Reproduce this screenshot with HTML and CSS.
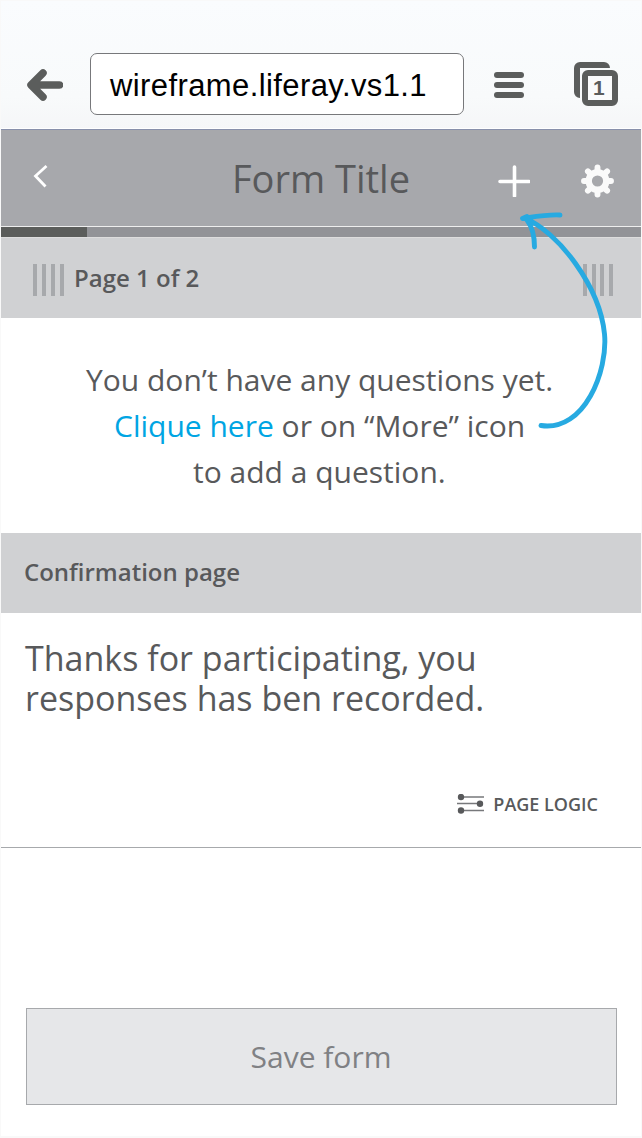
FILE: index.html
```html
<!DOCTYPE html>
<html lang="en">
<head>
<meta charset="utf-8">
<title>Form Title</title>
<link rel="stylesheet" href="styles.css">
</head>
<body>
<div class="screen">
  <header class="browser">
    <svg class="back-arrow" width="38" height="34" viewBox="0 0 38 34"><path d="M18 5 6 17 18 29M7 17h27.500" fill="none" stroke="#5b5d5c" stroke-width="7.500" stroke-linecap="round" stroke-linejoin="round"/></svg>
    <div class="address"><span>wireframe.liferay.vs1.1</span></div>
    <svg class="menu" width="30" height="26" viewBox="0 0 30 26" fill="#5b5d5c"><rect width="30" height="6" rx="3"/><rect y="10" width="30" height="6" rx="3"/><rect y="20" width="30" height="6" rx="3"/></svg>
    <div class="tabs">
      <svg width="44" height="44" viewBox="0 0 44 44"><path d="M36 6A6 6 0 0 0 30 0H6A6 6 0 0 0 0 6V30A6 6 0 0 0 6 36V6Z" fill="#5b5d5c"/><rect x="11" y="11" width="30" height="30" rx="3" fill="#fafbfc" stroke="#5b5d5c" stroke-width="6"/></svg>
      <span class="tab-count">1</span>
    </div>
  </header>
  <nav class="titlebar">
    <svg class="chevron" width="15" height="24" viewBox="0 0 15 24"><path d="M13.500 2 2.500 12 12.500 22.500" fill="none" stroke="#fff" stroke-width="2.800"/></svg>
    <h1>Form Title</h1>
    <svg class="plus" width="32" height="32" viewBox="0 0 32 32"><path d="M16.500 2v29M2 16.500h29" stroke="#fff" stroke-width="3.600" stroke-linecap="round"/></svg>
    <svg class="gear" width="34" height="34" viewBox="-17.500 -17 34 34">
      <g fill="none" stroke="#fafafa"><circle r="8.800" stroke-width="6.400"/><path d="M0-11V-13.500M0 11V13.500M-11 0H-13.500M11 0H13.500M-7.800-7.800-9.600-9.600M7.800 7.800 9.600 9.600M-7.800 7.800-9.600 9.600M7.800-7.800 9.600-9.600" stroke-width="5.900" stroke-linecap="round"/></g>
    </svg>
  </nav>
  <div class="progress"><div class="progress-value"></div></div>
  <div class="page-bar">
    <div class="grip"><i></i><i></i><i></i><i></i></div>
    <span class="page-name">Page 1 of 2</span>
    <div class="grip grip-end"><i></i><i></i><i></i><i></i></div>
  </div>
  <section class="empty">
    <p class="l1">You don’t have any questions yet.</p>
    <p class="l2"><a>Clique here</a> or on “More” icon</p>
    <p class="l3">to add a question.</p>
  </section>
  <div class="confirm-bar"><span>Confirmation page</span></div>
  <section class="confirm">
    <p class="t1">Thanks for participating, you</p>
    <p class="t2">responses has ben recorded.</p>
    <div class="logic">
      <svg width="27" height="20" viewBox="0 0 27 20"><path d="M1 3H27M0 9.500H26M1 16.500H27" stroke="#77787b" stroke-width="1.500"/><g fill="#58595b"><circle cx="4" cy="3" r="3.200"/><circle cx="23" cy="9.700" r="3.200"/><circle cx="4" cy="16.500" r="3.200"/></g></svg>
      <span>PAGE LOGIC</span>
    </div>
  </section>
  <footer class="actions"><button class="save"><span>Save form</span></button></footer>
  <svg class="hint" width="102" height="226" viewBox="0 0 102 226"><path d="M22 216.500C66 223 89 161 85.500 125C81 78 39 22 5 9M41 6C29 5.300 17 7.500 3.500 9.500L8 7.500M8 11C14 19 15.500 28 15.500 38" fill="none" stroke="#27aae1" stroke-width="4.900" stroke-linecap="round" stroke-linejoin="round"/></svg>
</div>
</body>
</html>
```
FILE: styles.css
```css
* { box-sizing: border-box; }
body, p, h1 { margin: 0; }
body { background: #fff; font-family: "Open Sans", sans-serif; color: #58595b; }
svg { display: block; flex: none; }
.screen { position: relative; display: flex; flex-direction: column; width: 642px; height: 1138px; border: 1px solid #f9f9f9; border-width: 1px 1px 2px; white-space: nowrap; overflow: hidden; }
.browser { display: flex; align-items: center; height: 129px; padding: 40px 23px 0 24px; background: linear-gradient(#fafcfe, #f8fafb 75%, #f5f6f8); border-bottom: 1px solid #8890ab; box-shadow: inset 0 -1px #fff; }
.address { display: flex; align-items: center; width: 374px; height: 62px; margin: -2px 0 0 27px; padding-left: 19px; border: 1px solid #77787b; border-radius: 7px; background: #fff; font: 31px "Liberation Sans", sans-serif; color: #000; }
.address span { padding-top: 3px; letter-spacing: .4px; }
.menu { margin: 0 0 0 30px; }
.tabs { position: relative; margin: -2px 0 0 50px; }
.tab-count { position: absolute; left: 19px; top: 15px; font: bold 21px/22px "Liberation Sans", sans-serif; color: #5b5d5c; }
.titlebar { display: flex; align-items: center; height: 96px; background: #a7a8ac; padding: 0 26px 0 32px; }
.chevron { margin-top: -5px; }
h1 { flex: none; width: 178px; margin: 0 88px 0 184px; font-size: 38px; font-weight: 400; line-height: 60px; padding-bottom: 1px; }
.plus { margin-top: 6px; }
.gear { margin: 6px 0 0 50px; }
.progress { height: 12px; background: #929397; border-top: 1px solid #eee; border-bottom: 1px solid #ddd; }
.progress-value { width: 85.500px; height: 10px; background: #5b5d5b; }
.page-bar { display: flex; align-items: center; height: 80px; padding: 4px 28px 0 32px; background: #d0d1d3; font-size: 24px; font-weight: 600; }
.page-name { margin: -6px 0 0 10px; }
.grip { display: flex; gap: 5px; height: 32px; }
.grip i { width: 4px; background: #a7a9ac; }
.grip-end { margin-left: auto; gap: 4.700px; }
.empty { height: 215px; padding-top: 39px; font-size: 30px; line-height: 46px; }
.l1 { padding-left: 85px; }
.l2 { padding-left: 113px; }
.l3 { padding-left: 192px; }
.empty a { color: #00a5e3; }
.confirm-bar { display: flex; align-items: center; height: 80px; padding: 0 23px 4px; background: #d0d1d3; font-size: 24px; font-weight: 600; }
.confirm { height: 235px; padding: 25px 43px 0 24px; border-bottom: 1px solid #a7a9ac; font-size: 34px; line-height: 40px; }
.logic { display: flex; align-items: center; justify-content: flex-end; gap: 9px; margin-top: 66px; font-size: 18px; font-weight: 600; }
.actions { padding: 160px 24px 0 25px; }
.save { display: block; width: 591px; height: 97px; border: 1px solid #a7a9ac; border-radius: 0; background: #e6e7e9; font: 30px "Open Sans", sans-serif; color: #808184; padding: 0 1px 0 0; }
.hint { position: absolute; left: 518px; top: 208px; }
```
